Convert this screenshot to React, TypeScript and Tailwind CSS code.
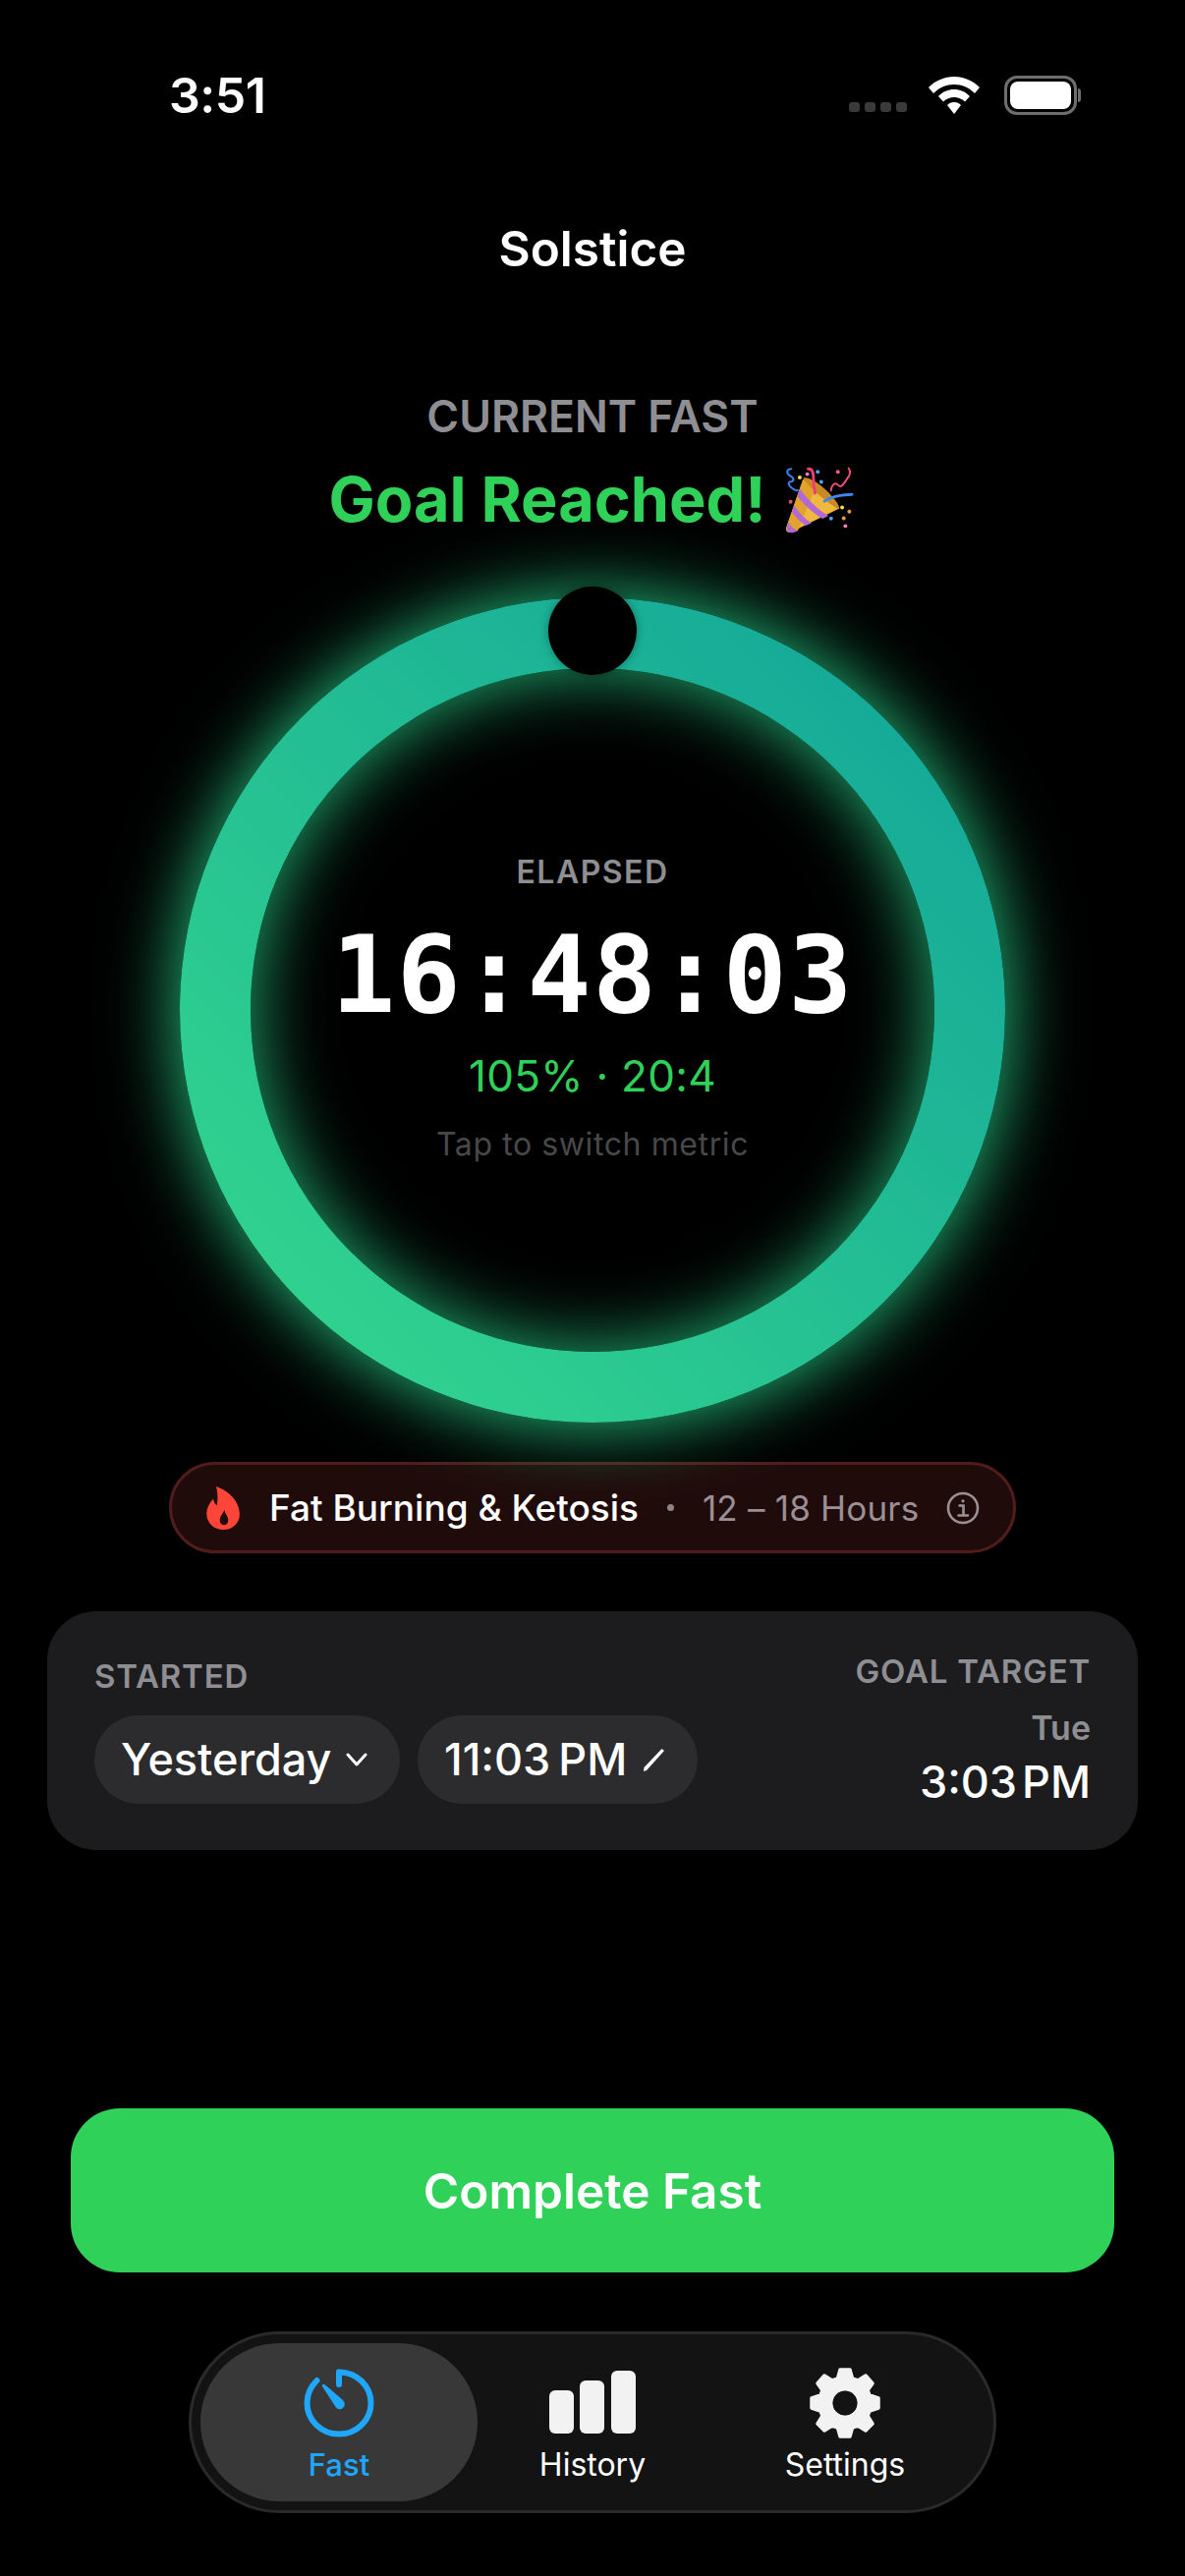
const sans = "font-['Inter','Liberation_Sans',sans-serif]";

const PartyPopper = () => (
  <svg width="77" height="73" viewBox="40 90 230 220" fill="none">
    <path d="M106 138 L56 282 C50 300 62 304 78 296 L216 228 Z" fill="#f0b93e" />
    <path d="M150 150 L90 296 L78 296 C62 304 50 300 56 282 L106 138 Z" fill="#e2a22f" />
    <path d="M106 134 C120 128 150 146 178 172 C204 198 222 222 216 230 C196 220 128 170 106 134 Z" fill="#c98a24" />
    <path d="M97 166 C115 196 150 230 184 250 L166 259 C134 240 106 212 89 190 Z" fill="#b368d8" />
    <path d="M79 218 C92 238 110 258 132 272 L115 280 C98 270 82 252 72 238 Z" fill="#b368d8" />
    <path d="M62 270 C68 282 78 292 90 296 L78 301 C64 304 54 298 57 284 Z" fill="#b368d8" />
    <path d="M122 106 C134 104 138 118 138 134 C138 150 140 166 143 180" stroke="#ef3f70" strokeWidth="9" strokeLinecap="round" />
    <path d="M172 205 C192 190 225 185 256 184" stroke="#3f86ee" strokeWidth="9" strokeLinecap="round" />
    <path d="M70 106 C52 108 56 122 68 128 C82 136 78 146 64 146 C56 150 72 172 90 172" stroke="#3f7fe8" strokeWidth="6" strokeLinecap="round" />
    <path d="M192 172 C194 152 206 146 214 156 C224 166 232 150 240 138 C252 124 252 112 246 104" stroke="#ef4a78" strokeWidth="6" strokeLinecap="round" />
    <circle cx="96" cy="132" r="6" fill="#f5e23a" />
    <circle cx="119" cy="122" r="6" fill="#ee7fb2" />
    <circle cx="151" cy="115" r="6" fill="#47a2f3" />
    <circle cx="162" cy="146" r="6" fill="#47a2f3" />
    <circle cx="213" cy="115" r="6" fill="#ee5c90" />
    <circle cx="68" cy="207" r="6" fill="#e44e6c" />
    <circle cx="226" cy="224" r="6" fill="#f5e23a" />
    <circle cx="248" cy="237" r="6" fill="#f09a3c" />
    <circle cx="192" cy="258" r="6" fill="#47a2f3" />
    <circle cx="231" cy="257" r="6" fill="#f09a3c" />
    <circle cx="236" cy="281" r="6" fill="#ee7fb2" />
  </svg>
);

const StatusBar = () => (
  <div className="flex items-center justify-between h-[40px] mt-[77px] pl-[172px] pr-[106px]">
    <span className="text-[50px] leading-[40px] font-semibold text-white tracking-[-0.5px]">3:51</span>
    <div className="flex items-center">
      <div className="flex gap-[5px] mt-[24px] mr-[22px]">
        <span className="w-[11px] h-[10px] rounded-[3px] bg-[#3a3a3c]" />
        <span className="w-[11px] h-[10px] rounded-[3px] bg-[#3a3a3c]" />
        <span className="w-[11px] h-[10px] rounded-[3px] bg-[#3a3a3c]" />
        <span className="w-[11px] h-[10px] rounded-[3px] bg-[#3a3a3c]" />
      </div>
      <svg width="52" height="38" viewBox="0 0 52 38" fill="white" className="mr-[25px]">
        <path d="M26 0 C36 0 45 4 52 11 L47 17 C41 11 34 8 26 8 C18 8 11 11 5 17 L0 11 C7 4 16 0 26 0 Z" />
        <path d="M26 13 C32 13 37 15 42 20 L37 25.5 C34 22.500 30 21 26 21 C22 21 18 22.500 15 25.500 L10 20 C15 15 20 13 26 13 Z" />
        <path d="M26 26 C29 26 31 27 33 29 L26 38 L19 29 C21 27 23 26 26 26 Z" />
      </svg>
      <div className="flex items-center">
        <div className="w-[74px] h-[40px] rounded-[13px] border-[3px] border-[#6e6e70] p-[3px]">
          <div className="w-full h-full rounded-[8px] bg-white" />
        </div>
        <span className="w-[3px] h-[14px] rounded-r-full bg-[#6e6e70] ml-[1px]" />
      </div>
    </div>
  </div>
);

const TimerRing = () => (
  <div className="relative mx-auto mt-[60px] w-[840px] h-[840px] shrink-0 rounded-full flex items-center justify-center bg-[linear-gradient(225deg,#16ab98_15%,#30d18f_85%)] shadow-[0_0_75px_rgba(40,214,140,0.95)]">
    <div className="w-[696px] h-[696px] rounded-full bg-black flex flex-col items-center shadow-[inset_0_0_75px_rgba(40,214,140,0.85)]">
      <p className="mt-[188px] text-[32px] leading-[40px] font-semibold tracking-[1.5px] text-[#8e8e93]">ELAPSED</p>
      <p className="mt-[30px] font-['DejaVu_Sans_Mono',monospace] text-[108px] leading-[110px] font-bold tracking-[1.4px] text-white">16:48:03</p>
      <p className="mt-[20px] text-[44px] leading-[54px] font-normal text-[#30d158] tracking-[0.3px]">105% · 20:4</p>
      <p className="mt-[23px] text-[32px] leading-[40px] font-normal text-[#48484a] tracking-[0.6px]">Tap to switch metric</p>
    </div>
    <span className="absolute top-[-11px] left-1/2 -translate-x-1/2 w-[90px] h-[90px] rounded-full bg-black shadow-[0_0_10px_rgba(0,0,0,0.35)]" />
  </div>
);

const PhasePill = () => (
  <div className="mx-auto mt-[40px] flex items-center w-[862px] h-[93px] rounded-full border-[3px] border-[#521c1c] bg-[#200b0b] pl-[35px] whitespace-nowrap">
    <svg width="35" height="44" viewBox="0 0 36 46" fill="#ff453a" className="shrink-0">
      <path fillRule="evenodd" d="M10 0 C22 4 34 14 35 28 C36 38 28 46 18 46 C8 46 0 39 0 29 C0 22 4 17 7 13 C8 17 9 19 11 20 C12 13 12 6 10 0 Z M19 25 C17 29 14 32 14 36 C14 39 16 41 18.500 41 C21 41 23 39 23 36 C23 32 20 30 19 25 Z" />
    </svg>
    <span className="ml-[29px] text-[37px] leading-[44px] font-medium text-white">Fat Burning &amp; Ketosis</span>
    <span className="ml-[29px] w-[7px] h-[7px] rounded-full bg-[#8f8589]" />
    <span className="ml-[29px] text-[35px] leading-[44px] font-normal text-[#9a9095] tracking-[0.2px]">12 – 18 Hours</span>
    <svg width="34" height="34" viewBox="0 0 34 34" fill="none" stroke="#9a9095" strokeWidth="2.6" className="ml-[28px] shrink-0">
      <circle cx="17" cy="17" r="15" />
      <path d="M13.500 14.500 H17.500 V24 M12.500 24.500 H22" strokeLinecap="round" />
      <circle cx="17" cy="9.800" r="1.600" fill="#9a9095" stroke="none" />
    </svg>
  </div>
);

const TimesCard = () => (
  <div className="mx-[48px] mt-[59px] h-[243px] shrink-0 rounded-[50px] bg-[#1c1c1e] flex justify-between pl-[48px] pr-[48px]">
    <div>
      <p className="mt-[46px] text-[33px] leading-[40px] font-semibold tracking-[0.8px] text-[#8e8e93]">STARTED</p>
      <div className="mt-[20px] flex gap-[18px]">
        <div className="h-[90px] w-[311px] rounded-full bg-[#2c2c2e] flex items-center pl-[27px]">
          <span className="text-[45px] leading-[56px] font-medium text-white">Yesterday</span>
          <svg width="22" height="14" viewBox="0 0 22 14" fill="none" stroke="white" strokeWidth="3" strokeLinecap="round" strokeLinejoin="round" className="ml-[15px]">
            <path d="M2 2 L11 12 L20 2" />
          </svg>
        </div>
        <div className="h-[90px] w-[285px] rounded-full bg-[#2c2c2e] flex items-center pl-[27px]">
          <span className="text-[45px] leading-[56px] font-medium text-white">11:03<span className="ml-[8px]">PM</span></span>
          <svg width="26" height="26" viewBox="0 0 26 26" className="ml-[15px]" fill="white">
            <path d="M20.500 2 L23 4 L5 24 L2 25 L2.500 21 Z" />
          </svg>
        </div>
      </div>
    </div>
    <div className="flex flex-col items-end">
      <p className="mt-[41px] text-[33px] leading-[40px] font-semibold tracking-[0.8px] text-[#8e8e93]">GOAL TARGET</p>
      <p className="mt-[18px] text-[34px] leading-[40px] font-semibold text-[#8e8e93]">Tue</p>
      <p className="mt-[7px] text-[45px] leading-[56px] font-medium text-white">3:03<span className="ml-[5px]">PM</span></p>
    </div>
  </div>
);

const TabBar = () => (
  <div className="mx-auto mt-[60px] w-[822px] h-[185px] rounded-full border-[3px] border-[#2a2a2a] bg-[#131313] flex items-stretch p-[9px]">
    <div className="w-[282px] rounded-full bg-[#383838] flex flex-col items-center">
      <svg width="74" height="72" viewBox="0 0 74 72" fill="none" className="mt-[25px]">
        <path d="M37 4.500 C55 4.500 69.500 18.500 69.500 36 C69.500 53.500 55 67.500 37 67.500 C19 67.500 4.500 53.500 4.500 36 C4.500 27 8.500 19 14.500 13" stroke="#1ea7fd" strokeWidth="6" strokeLinecap="round" />
        <path d="M37 4.500 V17" stroke="#1ea7fd" strokeWidth="6" strokeLinecap="round" />
        <path d="M20 19 C19 17 21.500 16 23 17.500 L41 33 C44 36 43 41 39 42 C36 43 34 41 33 39 Z" fill="#1ea7fd" />
      </svg>
      <span className="mt-[7px] text-[31px] leading-[40px] font-medium text-[#1ea7fd]">Fast</span>
    </div>
    <div className="w-[234px] flex flex-col items-center">
      <svg width="88" height="64" viewBox="0 0 88 64" fill="#f2f2f2" className="mt-[28px]">
        <rect x="0" y="20" width="25" height="44" rx="6" />
        <rect x="31" y="10" width="25" height="54" rx="6" />
        <rect x="63" y="0" width="25" height="64" rx="6" />
      </svg>
      <span className="mt-[12px] text-[32px] leading-[40px] font-normal text-white">History</span>
    </div>
    <div className="w-[280px] flex flex-col items-center">
      <svg width="72" height="72" viewBox="-36 -36 72 72" className="mt-[25px]">
        <path fill="#f2f2f2" fillRule="evenodd" d="M-5 -34 H5 L7.500 -25 L13 -23 L21 -28 L28 -20 L23 -13 L25 -8 L34 -5 V5 L25 8 L23 13 L28 21 L21 28 L13 23 L7.500 25 L5 34 H-5 L-7.500 25 L-13 23 L-21 28 L-28 21 L-23 13 L-25 8 L-34 5 V-5 L-25 -8 L-23 -13 L-28 -20 L-21 -28 L-13 -23 L-7.500 -25 Z M0 -14 A14 14 0 1 0 0 14 A14 14 0 1 0 0 -14 Z" stroke="#f2f2f2" strokeWidth="3.500" strokeLinejoin="round" />
        <circle r="12.500" fill="#131313" />
      </svg>
      <span className="mt-[7px] text-[32px] leading-[40px] font-normal text-white">Settings</span>
    </div>
  </div>
);

export default function App() {
  return (
    <div className={`w-[1206px] h-[2622px] bg-black flex flex-col overflow-hidden ${sans}`}>
      <StatusBar />
      <h1 className="mt-[106px] text-center text-[49.500px] leading-[60px] font-semibold text-white">Solstice</h1>
      <p className="mt-[115px] text-center text-[44.500px] leading-[52px] font-semibold text-[#8e8e93]">CURRENT FAST</p>
      <div className="mt-[18px] h-[80px] flex items-center justify-center gap-[15px]">
        <span className="text-[63px] leading-[72px] font-bold text-[#30d158]">Goal Reached!</span>
        <PartyPopper />
      </div>
      <TimerRing />
      <PhasePill />
      <TimesCard />
      <button type="button" className="mx-[72px] mt-[263px] h-[167px] shrink-0 rounded-[50px] bg-[#30d158] text-white text-[49.500px] leading-[60px] font-semibold">
        Complete Fast
      </button>
      <TabBar />
    </div>
  );
}
